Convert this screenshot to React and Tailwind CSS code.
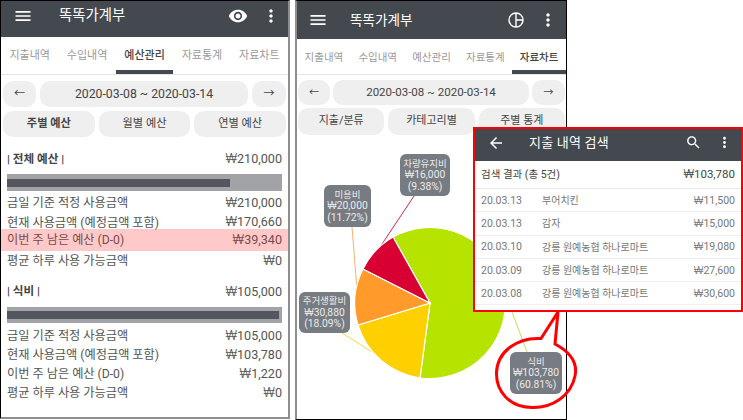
const font = { fontFamily: '"Roboto","Noto Sans CJK KR",sans-serif' };

function Ic({ d, size = 24, className = "" }) {
  return (
    <svg width={size} height={size} viewBox="0 0 24 24" fill="currentColor" className={className}>
      <path d={d} />
    </svg>
  );
}
const MENU = "M3 18h18v-2H3v2zm0-5h18v-2H3v2zm0-7v2h18V6H3z";
const MORE = "M12 8c1.1 0 2-.9 2-2s-.9-2-2-2-2 .9-2 2 .9 2 2 2zm0 2c-1.1 0-2 .9-2 2s.9 2 2 2 2-.9 2-2-.9-2-2-2zm0 6c-1.1 0-2 .9-2 2s.9 2 2 2 2-.9 2-2-.9-2-2-2z";
const EYE = "M12 4.5C7 4.5 2.73 7.61 1 12c1.73 4.39 6 7.5 11 7.5s9.27-3.11 11-7.5c-1.73-4.39-6-7.5-11-7.5zM12 17c-2.76 0-5-2.24-5-5s2.24-5 5-5 5 2.24 5 5-2.24 5-5 5zm0-8c-1.66 0-3 1.34-3 3s1.34 3 3 3 3-1.34 3-3-1.34-3-3-3z";
const SEARCH = "M15.5 14h-.79l-.28-.27C15.41 12.59 16 11.11 16 9.5 16 5.91 13.09 3 9.5 3S3 5.91 3 9.5 5.91 16 9.5 16c1.61 0 3.09-.59 4.23-1.57l.27.28v.79l5 4.99L20.49 19l-4.99-5zm-6 0C7.01 14 5 11.99 5 9.5S7.01 5 9.5 5 14 7.01 14 9.5 11.99 14 9.5 14z";
const BACK = "M20 11H7.83l5.59-5.59L12 4l-8 8 8 8 1.41-1.41L7.83 13H20v-2z";

function Won({ v }) {
  return (
    <span>
      <span className="font-['Inter',sans-serif] font-light">₩</span>
      {v}
    </span>
  );
}

function Tabs({ active, cls }) {
  const names = ["지출내역", "수입내역", "예산관리", "자료통계", "자료차트"];
  return (
    <div className={`flex border-b border-[#e4e4e4] shrink-0 ${cls}`}>
      {names.map((n, i) => (
        <div key={n} className={`relative flex-1 flex items-center justify-center pt-[2px] ${i === active ? "text-[#444] font-medium" : "text-[#9a9a9a]"}`}>
          {n}
          {i === active && <div className="absolute left-0 right-0 bottom-0 h-[4px] bg-[#44484f]" />}
        </div>
      ))}
    </div>
  );
}
function Pill({ children, className = "" }) {
  return <div className={`flex items-center justify-center bg-[#efefef] rounded-[10px] text-[#444] ${className}`}>{children}</div>;
}
function Section({ title, total, pct, rows, highlight, rowH, barH, rowsMt }) {
  return (
    <div className="text-[12.2px] text-[#555]">
      <div className="flex items-center justify-between px-[6px] h-[20px] pt-[1px]">
        <span className="font-bold text-[11.6px] text-[#444]">| {title} |</span>
        <span className="text-[12.6px]"><Won v={total} /></span>
      </div>
      <div className={`mx-[6px] mt-[5px] bg-[#a2a3a7] flex items-center ${barH}`}>
        <div className="h-[8px] bg-[#54565f]" style={{ width: pct }} />
      </div>
      <div className={rowsMt}>
        {rows.map((r, i) => (
          <div key={r[0]} className={`flex items-center justify-between px-[6px] pt-[1px] ${highlight === i ? "bg-[#ffc9c9] text-[#7a4a4a] h-[22px] -mt-[3px]" : rowH}`}>
            <span>{r[0]}</span>
            <span className="text-[12.6px]"><Won v={r[1]} /></span>
          </div>
        ))}
      </div>
    </div>
  );
}
function LabelBox({ cls, a, b, c }) {
  return (
    <div className={`absolute rounded-[6px] bg-[#777b82] text-[#ececec] text-[9.5px] leading-[11.5px] whitespace-nowrap flex flex-col items-center justify-center ${cls}`}>
      <div>{a}</div>
      <div className="text-[10.3px]"><Won v={b} /></div>
      <div className="text-[10.3px]">{c}</div>
    </div>
  );
}

export default function App() {
  return (
    <div className="relative w-[743px] h-[420px] overflow-hidden bg-white flex items-start" style={font}>
      {/* left phone */}
      <div className="w-[290px] h-[419px] border-l border-l-black border-t border-t-black border-r-2 border-r-[#8e8e8e] border-b-2 border-b-[#8e8e8e] flex flex-col shrink-0">
        <div className="h-[36px] pb-[7px] bg-[#44484f] text-white flex items-center shrink-0">
          <Ic d={MENU} size={20} className="ml-[12px] text-white" />
          <div className="ml-[26px] text-[14.4px] flex-1">똑똑가계부</div>
          <Ic d={EYE} size={20} className="text-white mr-[13px]" />
          <Ic d={MORE} size={20} className="text-white mr-[7px]" />
        </div>
        <Tabs active={2} cls="h-[38px] text-[11px]" />
        <div className="flex gap-[4px] px-[2px] mt-[6px] text-[12.25px] h-[26px]">
          <Pill className="w-[33px] text-[11px]">←</Pill>
          <Pill className="flex-1 pt-[1px]">2020-03-08 ~ 2020-03-14</Pill>
          <Pill className="w-[34px] text-[11px]">→</Pill>
        </div>
        <div className="flex gap-[4px] px-[2px] mt-[4px] text-[11.2px] h-[26px]">
          <Pill className="flex-1 font-bold">주별 예산</Pill>
          <Pill className="flex-1">월별 예산</Pill>
          <Pill className="flex-1">연별 예산</Pill>
        </div>
        <div className="mt-[12px]">
          <Section title="전체 예산" total="210,000" pct="81%" highlight={2} rowH="h-[19.5px]" barH="h-[17px]" rowsMt="mt-[2px]" rows={[
            ["금일 기준 적정 사용금액", "210,000"],
            ["현재 사용금액 (예정금액 포함)", "170,660"],
            ["이번 주 남은 예산 (D-0)", "39,340"],
            ["평균 하루 사용 가능금액", "0"],
          ]} />
        </div>
        <div className="mt-[11px]">
          <Section title="식비" total="105,000" pct="99%" rowH="h-[19px]" barH="h-[16px]" rowsMt="mt-[4px]" rows={[
            ["금일 기준 적정 사용금액", "105,000"],
            ["현재 사용금액 (예정금액 포함)", "103,780"],
            ["이번 주 남은 예산 (D-0)", "1,220"],
            ["평균 하루 사용 가능금액", "0"],
          ]} />
        </div>
      </div>
      {/* right phone */}
      <div className="relative ml-[5px] w-[272px] h-[420px] border-l-2 border-l-[#8e8e8e] border-r border-r-black border-b border-b-black border-t border-t-black flex flex-col shrink-0">
        <div className="h-[38px] bg-[#44484f] text-white flex items-center shrink-0">
          <Ic d={MENU} size={20} className="ml-[11px] text-white" />
          <div className="ml-[22px] text-[13.6px] flex-1">똑똑가계부</div>
          <svg width="16" height="16" viewBox="0 0 16 16" fill="none" stroke="white" strokeWidth="1.4" className="mr-[14px]">
            <circle cx="8" cy="8" r="7" />
            <path d="M8 1V15M8 8H15" />
          </svg>
          <Ic d={MORE} size={20} className="text-white mr-[8px]" />
        </div>
        <Tabs active={4} cls="h-[36px] text-[10.5px]" />
        <div className="flex gap-[3px] px-[1px] mt-[5px] text-[11.5px] h-[25px]">
          <Pill className="w-[32px] text-[10px]">←</Pill>
          <Pill className="flex-1 pt-[1px]">2020-03-08 ~ 2020-03-14</Pill>
          <Pill className="w-[33px] text-[10px]">→</Pill>
        </div>
        <div className="flex gap-[4px] px-[1px] mt-[3px] text-[11px] h-[27px]">
          <Pill className="flex-1">지출/분류</Pill>
          <Pill className="flex-1">카테고리별</Pill>
          <Pill className="flex-1">주별 통계</Pill>
        </div>
        <div className="relative flex-1 -mt-[2px]">
          <svg width="269" height="285" className="absolute left-0 top-0">
            <line x1="117" y1="63" x2="83" y2="114" stroke="#c8274f" />
            <line x1="55" y1="94" x2="60" y2="157" stroke="#f5b46a" />
            <line x1="45" y1="200" x2="83" y2="224" stroke="#f2d84a" />
            <line x1="215" y1="179" x2="230" y2="219" stroke="#c4dc55" />
            <g transform="translate(133,170)" stroke="white" strokeWidth="1.2">
              <path d="M0 0 L-10 75 A75.6 75.6 0 1 0 -37 -66 Z" fill="#b6e300" />
              <path d="M0 0 L-72 22 A75.6 75.6 0 0 0 -10 75 Z" fill="#ffd000" />
              <path d="M0 0 L-67 -34 A75.6 75.6 0 0 0 -72 22 Z" fill="#ff9a2b" />
              <path d="M0 0 L-37 -66 A75.6 75.6 0 0 0 -67 -34 Z" fill="#d80032" />
            </g>
          </svg>
          <LabelBox cls="left-[103px] top-[21px] w-[50px] h-[42px]" a="차량유지비" b="16,000" c="(9.38%)" />
          <LabelBox cls="left-[27px] top-[52px] w-[47px] h-[42px]" a="미용비" b="20,000" c="(11.72%)" />
          <LabelBox cls="left-[2px] top-[159px] w-[51px] h-[41px]" a="주거생활비" b="30,880" c="(18.09%)" />
          <LabelBox cls="left-[213px] top-[219px] w-[52px] h-[42px]" a="식비" b="103,780" c="(60.81%)" />
        </div>
      </div>
      {/* zoomed search popup */}
      <div className="absolute left-[473px] top-[127px] w-[270px] h-[185px] border-[2px] border-[#ff0000] bg-white flex flex-col text-[#444]">
        <div className="h-[32px] pb-[5px] bg-[#44484f] text-white flex items-center shrink-0">
          <Ic d={BACK} size={18} className="ml-[12px]" />
          <div className="ml-[24px] flex-1 text-[13px] tracking-[0.2px]">지출 내역 검색</div>
          <Ic d={SEARCH} size={17} className="mr-[14px]" />
          <Ic d={MORE} size={17} className="mr-[8px]" />
        </div>
        <div className="h-[28px] pt-[1px] flex items-center justify-between px-[6px] border-b border-[#e8e8e8] text-[10.5px] shrink-0">
          <span>검색 결과 (총 5건)</span>
          <span className="text-[11.5px]"><Won v="103,780" /></span>
        </div>
        {[
          ["20.03.13", "부어치킨", "11,500"],
          ["20.03.13", "감자", "15,000"],
          ["20.03.10", "강릉 원예농협 하나로마트", "19,080"],
          ["20.03.09", "강릉 원예농협 하나로마트", "27,600"],
          ["20.03.08", "강릉 원예농협 하나로마트", "30,600"],
        ].map((r, i) => (
          <div key={i} className="h-[23.3px] pt-[1px] flex items-center px-[6px] border-b border-[#f0f0f0] text-[10.5px] text-[#777] shrink-0">
            <span className="w-[61px]">{r[0]}</span>
            <span className="flex-1 text-[10px]">{r[1]}</span>
            <Won v={r[2]} />
          </div>
        ))}
      </div>
      {/* callout */}
      <svg width="743" height="420" className="absolute left-0 top-0 pointer-events-none" fill="none">
        <path d="M541 338.5 L558 312 L555 344 C570 352 578 362 575 376 C571 396 552 408 532 407.5 C510 407 496 392 496.5 373 C497 352 517 337 541 338.5 Z" stroke="#ff0000" strokeWidth="3" />
      </svg>
    </div>
  );
}
